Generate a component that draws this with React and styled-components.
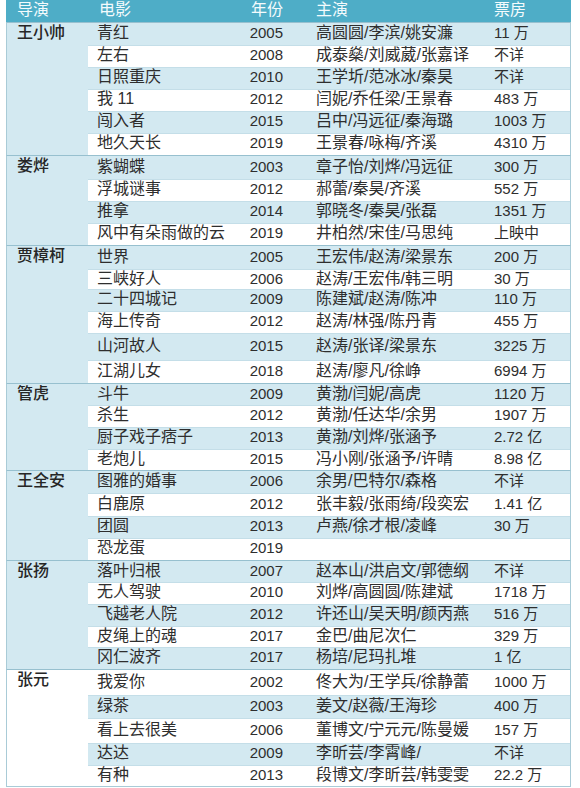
import styled, { createGlobalStyle } from 'styled-components';

const GlobalStyle = createGlobalStyle`
  html, body {
    margin: 0;
    padding: 0;
    background: #ffffff;
  }
  body {
    font-family: 'Liberation Sans', 'Noto Sans CJK SC', sans-serif;
    color: #2e2e2e;
  }
`;

const directors = [
  {
    name: '王小帅',
    films: [
      ['青红', '2005', '高圆圆/李滨/姚安濂', '11 万', 22],
      ['左右', '2008', '成泰燊/刘威葳/张嘉译', '不详', 22],
      ['日照重庆', '2010', '王学圻/范冰冰/秦昊', '不详', 22],
      ['我 11', '2012', '闫妮/乔任梁/王景春', '483 万', 22],
      ['闯入者', '2015', '吕中/冯远征/秦海璐', '1003 万', 22],
      ['地久天长', '2019', '王景春/咏梅/齐溪', '4310 万', 22],
    ],
  },
  {
    name: '娄烨',
    films: [
      ['紫蝴蝶', '2003', '章子怡/刘烨/冯远征', '300 万', 23],
      ['浮城谜事', '2012', '郝蕾/秦昊/齐溪', '552 万', 22],
      ['推拿', '2014', '郭晓冬/秦昊/张磊', '1351 万', 22],
      ['风中有朵雨做的云', '2019', '井柏然/宋佳/马思纯', '上映中', 22],
    ],
  },
  {
    name: '贾樟柯',
    films: [
      ['世界', '2005', '王宏伟/赵涛/梁景东', '200 万', 23],
      ['三峡好人', '2006', '赵涛/王宏伟/韩三明', '30 万', 20],
      ['二十四城记', '2009', '陈建斌/赵涛/陈冲', '110 万', 22],
      ['海上传奇', '2012', '赵涛/林强/陈丹青', '455 万', 22],
      ['山河故人', '2015', '赵涛/张译/梁景东', '3225 万', 27],
      ['江湖儿女', '2018', '赵涛/廖凡/徐峥', '6994 万', 23],
    ],
  },
  {
    name: '管虎',
    films: [
      ['斗牛', '2009', '黄渤/闫妮/高虎', '1120 万', 21],
      ['杀生', '2012', '黄渤/任达华/余男', '1907 万', 22],
      ['厨子戏子痞子', '2013', '黄渤/刘烨/张涵予', '2.72 亿', 22],
      ['老炮儿', '2015', '冯小刚/张涵予/许晴', '8.98 亿', 21],
    ],
  },
  {
    name: '王全安',
    films: [
      ['图雅的婚事', '2006', '余男/巴特尔/森格', '不详', 22],
      ['白鹿原', '2012', '张丰毅/张雨绮/段奕宏', '1.41 亿', 23],
      ['团圆', '2013', '卢燕/徐才根/凌峰', '30 万', 22],
      ['恐龙蛋', '2019', '', '', 22],
    ],
  },
  {
    name: '张扬',
    films: [
      ['落叶归根', '2007', '赵本山/洪启文/郭德纲', '不详', 21],
      ['无人驾驶', '2010', '刘烨/高圆圆/陈建斌', '1718 万', 22],
      ['飞越老人院', '2012', '许还山/吴天明/颜丙燕', '516 万', 22],
      ['皮绳上的魂', '2017', '金巴/曲尼次仁', '329 万', 21],
      ['冈仁波齐', '2017', '杨培/尼玛扎堆', '1 亿', 22],
    ],
  },
  {
    name: '张元',
    films: [
      ['我爱你', '2002', '佟大为/王学兵/徐静蕾', '1000 万', 25],
      ['绿茶', '2003', '姜文/赵薇/王海珍', '400 万', 23],
      ['看上去很美', '2006', '董博文/宁元元/陈曼媛', '157 万', 25],
      ['达达', '2009', '李昕芸/李霄峰/', '不详', 22],
      ['有种', '2013', '段博文/李昕芸/韩雯雯', '22.2 万', 21],
    ],
  },
];

const Table = styled.div`
  margin-left: 6px;
  width: 565px;
  display: flex;
  flex-direction: column;
  border-bottom: 1px solid #a9cbd7;
`;

const HeaderRow = styled.div`
  display: grid;
  grid-template-columns: 84px 148px 62px 186px 85px;
  height: 22px;
  align-items: center;
  background: #4eadc7;
  color: #f4fbfd;
  font-size: 16px;
`;

const HeadCell = styled.div`
  padding-left: ${({ $pad }) => $pad || 0}px;
  text-align: ${({ $right }) => ($right ? 'right' : 'left')};
  padding-right: ${({ $right }) => ($right ? 17 : 0)}px;
  line-height: 20px;
  padding-bottom: 2px;
`;

const Group = styled.div`
  display: flex;
  border-top: 1px solid #97c0cf;
  border-left: 1px solid #a9cbd7;
  border-right: 1px solid #a9cbd7;
  &:first-of-type {
    border-top: none;
  }
`;

const DirectorCell = styled.div`
  width: 81px;
  flex: none;
  background: ${({ $shaded }) => ($shaded ? '#d3e9f1' : '#ffffff')};
  padding: 0 0 0 10px;
  box-sizing: border-box;
  font-size: 16px;
  line-height: 20px;
  font-weight: 500;
  color: #262626;
`;

const FilmList = styled.div`
  flex: 1;
  display: flex;
  flex-direction: column;
`;

const FilmRow = styled.div`
  display: grid;
  grid-template-columns: 150px 62px 186px 84px;
  align-items: center;
  background: ${({ $shaded }) => ($shaded ? '#d3e9f1' : '#ffffff')};
  border-top: 1px solid ${({ $first }) => ($first ? 'transparent' : '#c4dee8')};
  box-sizing: border-box;
  padding-bottom: 3px;
  font-size: 16px;
  line-height: 18px;
  color: #2e2e2e;
`;

const Title = styled.div`
  padding-left: 9px;
  white-space: nowrap;
`;

const Year = styled.div`
  text-align: right;
  padding-right: 17px;
  font-size: 15px;
`;

const Cast = styled.div`
  padding-left: 16px;
  white-space: nowrap;
`;

const BoxOffice = styled.div`
  padding-left: 8px;
  font-size: 15px;
  white-space: nowrap;
`;

export default function App() {
  let index = 0;
  return (
    <>
      <GlobalStyle />
      <Table>
        <HeaderRow>
          <HeadCell $pad={11}>导演</HeadCell>
          <HeadCell $pad={9}>电影</HeadCell>
          <HeadCell $right>年份</HeadCell>
          <HeadCell $pad={16}>主演</HeadCell>
          <HeadCell $pad={8}>票房</HeadCell>
        </HeaderRow>
        {directors.map((d) => {
          const firstShaded = index % 2 === 0;
          return (
            <Group key={d.name}>
              <DirectorCell $shaded={firstShaded}>{d.name}</DirectorCell>
              <FilmList>
                {d.films.map(([title, year, cast, box, h], i) => {
                  const shaded = index % 2 === 0;
                  index += 1;
                  return (
                    <FilmRow key={title} $shaded={shaded} $first={i === 0} style={{ height: h }}>
                      <Title>{title}</Title>
                      <Year>{year}</Year>
                      <Cast>{cast}</Cast>
                      <BoxOffice>{box}</BoxOffice>
                    </FilmRow>
                  );
                })}
              </FilmList>
            </Group>
          );
        })}
      </Table>
    </>
  );
}
